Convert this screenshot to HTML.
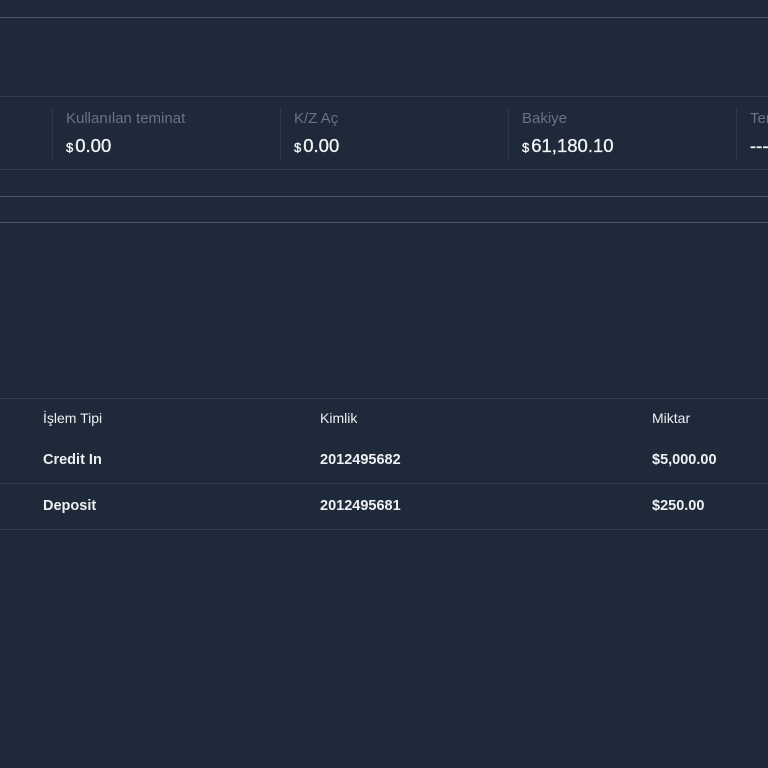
<!DOCTYPE html>
<html><head><meta charset="utf-8"><style>
html,body{margin:0;padding:0;width:768px;height:768px;overflow:hidden;background:#1e2939;font-family:"Liberation Sans",sans-serif;}
.l{position:absolute;left:0;width:768px;height:1px;}
.a{position:absolute;white-space:nowrap;}
.lab{font-size:15px;color:#6a7384;}
.val{font-size:18.5px;color:#f3f4f6;-webkit-text-stroke:0.3px #f3f4f6;}
.val small{font-size:13px;margin-right:2px;}
.sep{position:absolute;top:108px;width:1px;height:52px;background:#2f3a4a;}
.t{font-size:14px;color:#eef0f3;}
.b{font-weight:bold;font-size:14.5px;}
</style></head><body>
<div class="l" style="top:17px;background:#4b5667"></div>
<div class="l" style="top:96px;background:#323d4d"></div>
<div class="l" style="top:169px;background:#323d4d"></div>
<div class="l" style="top:196px;background:#4b5667"></div>
<div class="l" style="top:222px;background:#4b5667"></div>
<div class="l" style="top:398px;background:#323d4d"></div>
<div class="l" style="top:483px;background:#323d4d"></div>
<div class="l" style="top:529px;background:#323d4d"></div>

<div class="sep" style="left:52px"></div>
<div class="sep" style="left:280px"></div>
<div class="sep" style="left:508px"></div>
<div class="sep" style="left:736px"></div>

<div class="a lab" style="left:66px;top:110px">Kullanılan teminat</div>
<div class="a val" style="left:66px;top:135px"><small>$</small>0.00</div>
<div class="a lab" style="left:294px;top:110px">K/Z Aç</div>
<div class="a val" style="left:294px;top:135px"><small>$</small>0.00</div>
<div class="a lab" style="left:522px;top:110px">Bakiye</div>
<div class="a val" style="left:522px;top:135px"><small>$</small>61,180.10</div>
<div class="a lab" style="left:750px;top:110px">Teminat</div>
<div class="a val" style="left:750px;top:135px">---</div>

<div class="a t" style="left:43px;top:410px">İşlem Tipi</div>
<div class="a t" style="left:320px;top:410px">Kimlik</div>
<div class="a t" style="left:652px;top:410px">Miktar</div>
<div class="a t b" style="left:43px;top:452px">Credit In</div>
<div class="a t b" style="left:320px;top:452px">2012495682</div>
<div class="a t b" style="left:652px;top:452px">$5,000.00</div>
<div class="a t b" style="left:43px;top:498px">Deposit</div>
<div class="a t b" style="left:320px;top:498px">2012495681</div>
<div class="a t b" style="left:652px;top:498px">$250.00</div>
</body></html>
